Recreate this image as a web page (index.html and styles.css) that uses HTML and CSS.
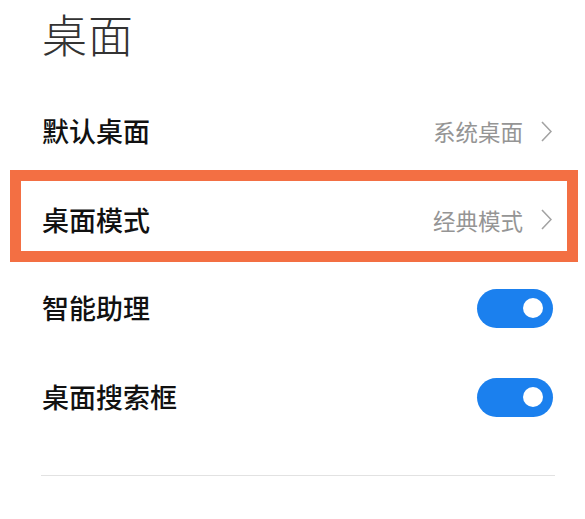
FILE: index.html
```html
<!DOCTYPE html>
<html lang="zh-CN">
<head>
<meta charset="utf-8">
<link rel="stylesheet" href="styles.css">
</head>
<body>
<div class="page">
  <h1 class="title">桌面</h1>
  <div class="row row-first">
    <span class="label">默认桌面</span>
    <span class="value">系统桌面<svg class="chev" width="11" height="21" viewBox="0 0 11 21"><path d="M1 1 L10 10.5 L1 20" fill="none" stroke="#a3a3a3" stroke-width="1.6"/></svg></span>
  </div>
  <div class="row row-hl">
    <span class="label">桌面模式</span>
    <span class="value">经典模式<svg class="chev" width="11" height="21" viewBox="0 0 11 21"><path d="M1 1 L10 10.5 L1 20" fill="none" stroke="#a3a3a3" stroke-width="1.6"/></svg></span>
  </div>
  <div class="row row-sw">
    <span class="label">智能助理</span>
    <span class="toggle"><span class="knob"></span></span>
  </div>
  <div class="row row-sw">
    <span class="label">桌面搜索框</span>
    <span class="toggle"><span class="knob"></span></span>
  </div>
  <div class="divider"></div>
</div>
</body>
</html>
```
FILE: styles.css
```css
html, body {
  margin: 0;
  padding: 0;
  background: #ffffff;
}
body {
  font-family: "Noto Sans CJK SC", "Noto Sans", sans-serif;
  width: 585px;
  height: 519px;
  overflow: hidden;
}
.page {
  padding: 0 33px 0 42px;
}
.title {
  margin: 0;
  padding-top: 11px;
  height: 75px;
  font-size: 45px;
  line-height: 45px;
  font-weight: 300;
  color: #333333;
  letter-spacing: 1px;
}
.row {
  display: flex;
  align-items: center;
  justify-content: space-between;
  box-sizing: border-box;
}
.row-first {
  height: 84px;
  padding-top: 6px;
}
.row-hl {
  height: 92px;
  margin: 0 -26px 0 -32px;
  border: 11px solid #f36f43;
  padding: 7px 15px 0 21px;
}
.row-sw {
  height: 89px;
  padding-top: 3px;
}
.label {
  font-size: 27px;
  font-weight: 500;
  color: #111111;
  line-height: 30px;
}
.value {
  display: flex;
  align-items: center;
  font-size: 22.5px;
  color: #959595;
  line-height: 30px;
}
.chev {
  margin-left: 18px;
  display: block;
}
.toggle {
  position: relative;
  width: 76px;
  height: 39px;
  border-radius: 20px;
  background: #1b80ee;
  margin-right: -1px;
}
.knob {
  position: absolute;
  right: 10px;
  top: 9.5px;
  width: 20px;
  height: 20px;
  border-radius: 50%;
  background: #ffffff;
}
.divider {
  margin-top: 35px;
  margin-left: -1px;
  margin-right: -3px;
  height: 1px;
  background: #e2e2e2;
}
```
